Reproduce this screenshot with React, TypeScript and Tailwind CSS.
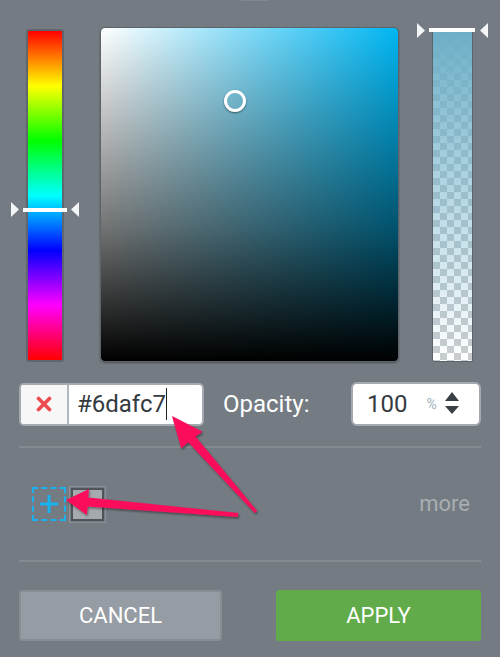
import React from 'react';

const checker =
  'repeating-conic-gradient(#c9cdd0 0% 25%, #ffffff 0% 50%) 0 0 / 14px 14px';

function Tri({ dir, className }: { dir: 'left' | 'right'; className: string }) {
  return (
    <svg width="8" height="15" viewBox="0 0 8 15" className={className}>
      {dir === 'right' ? (
        <polygon points="0,0 8,7.5 0,15" fill="#f4f5f6" />
      ) : (
        <polygon points="8,0 0,7.5 8,15" fill="#f4f5f6" />
      )}
    </svg>
  );
}

function Arrows() {
  return (
    <svg className="absolute inset-0 pointer-events-none" width="500" height="657" viewBox="0 0 500 657">
      <defs>
        <filter id="sh" x="-20%" y="-20%" width="140%" height="140%">
          <feDropShadow dx="1" dy="1.5" stdDeviation="0.8" floodColor="#000" floodOpacity="0.45" />
        </filter>
      </defs>
      <g fill="#fc0d5b" filter="url(#sh)">
        {/* arrow pointing at hex input */}
        <polygon points="172,416 202.5,431.8 195.5,436.6 257.1,510.9 254.9,513.1 188.3,442.3 181.2,448.6" />
        {/* arrow pointing at add swatch */}
        <polygon points="66,500 89,489 88.2,497.4 238.2,513 237.8,517 87.6,506.4 86.8,515" />
      </g>
    </svg>
  );
}

export default function App() {
  return (
    <div
      className="relative w-[500px] h-[657px] bg-[#747b82] overflow-hidden"
      style={{ fontFamily: 'Roboto, "Liberation Sans", sans-serif' }}
    >
      {/* little top handle */}
      <div className="absolute top-0 left-[241px] w-[27px] h-[1px] bg-[#81878d]" />

      {/* pickers */}
      <div className="flex pt-[27px]">
        {/* hue bar */}
        <div className="relative ml-[26px] mt-[2px] w-[38px] h-[333px]">
          <div
            className="w-full h-full rounded-[3px] border-2 border-[#5f666d]"
            style={{
              background:
                'linear-gradient(to bottom, #ff0000, #ffff00, #00ff00, #00ffff, #0000ff, #ff00ff, #ff0000)',
            }}
          />
          <div className="absolute left-[-3px] w-[44px] h-[4px] top-[179px] bg-white" />
          <Tri dir="right" className="absolute left-[-15px] top-[173px]" />
          <Tri dir="left" className="absolute left-[45px] top-[173px]" />
        </div>

        {/* saturation / value */}
        <div
          className="relative ml-[36px] w-[299px] h-[335px] rounded-[5px] border border-[#5c636a] shadow-[0_1px_2px_rgba(0,0,0,0.35)]"
          style={{
            background:
              'linear-gradient(to top, #000 0%, rgba(0,0,0,0.55) 40%, rgba(0,0,0,0) 100%), linear-gradient(to right, #ffffff, #00b6f2)',
          }}
        >
          <div className="absolute left-[123px] top-[62px] w-[22px] h-[22px] rounded-full border-[3px] border-white shadow-[0_1px_2px_rgba(0,0,0,0.5)]" />
        </div>

        {/* alpha bar */}
        <div className="relative ml-[33px] mt-[3px] w-[41px] h-[332px]">
          <div
            className="w-full h-full rounded-[2px] border border-[#5c636a]"
            style={{
              background: `linear-gradient(to bottom, rgba(109,175,199,1), rgba(109,175,199,0)), ${checker}`,
            }}
          />
          <div className="absolute left-[-3px] top-[-2px] w-[46px] h-[4px] bg-white" />
          <Tri dir="right" className="absolute left-[-15px] top-[-7px]" />
          <Tri dir="left" className="absolute left-[48px] top-[-7px]" />
        </div>
      </div>

      {/* hex + opacity */}
      <div className="flex items-center px-[19px] mt-[20px]">
        <div className="flex w-[185px] h-[43px] bg-white rounded-[5px] border-2 border-[#a4aaaf] overflow-hidden">
          <div className="w-[48px] h-full flex items-center justify-center bg-[#f7f7f7] border-r-2 border-[#b3b8bc]">
            <svg width="16" height="16" viewBox="0 0 16 16">
              <path d="M2.5 2.5 L13.5 13.5 M13.5 2.5 L2.5 13.5" stroke="#ec4b4f" strokeWidth="3.6" strokeLinecap="round" />
            </svg>
          </div>
          <div className="flex items-center pl-[8px] text-[24px] text-[#343a40] leading-none">
            #6dafc7
            <span className="w-[1.5px] h-[32px] bg-[#222]" />
          </div>
        </div>
        <span className="ml-[19px] text-[24px] text-white leading-none">Opacity:</span>
        <div className="ml-auto flex items-center w-[130px] h-[44px] bg-white rounded-[6px] border-2 border-[#a4aaaf]">
          <span className="ml-[14px] text-[24px] text-[#343a40] leading-none">100</span>
          <span className="ml-[19px] text-[14px] text-[#9fb0bb] leading-none">%</span>
          <svg width="14" height="24" viewBox="0 0 14 24" className="ml-[8px]">
            <polygon points="7,0 14,9 0,9" fill="#3a4046" />
            <polygon points="0,14 14,14 7,22" fill="#3a4046" />
          </svg>
        </div>
      </div>

      <div className="mx-[19px] mt-[20px] h-[2px] bg-[#858b91]" />

      {/* swatches */}
      <div className="flex items-center h-[112px] pl-[32px] pr-[30px]">
        <div className="w-[34px] h-[34px] border-2 border-dashed border-[#19b1f0] flex items-center justify-center">
          <svg width="20" height="20" viewBox="0 0 20 20">
            <path d="M10 1 V19 M1 10 H19" stroke="#19b1f0" strokeWidth="3" />
          </svg>
        </div>
        <div className="ml-[3px] w-[37px] h-[37px] border border-[#8b9197] p-[1px]">
          <div className="w-full h-full border-2 border-[#4e545a] bg-[#a6aaae]" />
        </div>
        <span className="ml-auto text-[22px] text-[#a9aeb3] leading-none">more</span>
      </div>

      <div className="mx-[19px] h-[2px] bg-[#858b91]" />

      {/* buttons */}
      <div className="flex justify-between px-[19px] mt-[28px]">
        <button className="w-[203px] h-[51px] rounded-[3px] bg-[#969ca3] border-2 border-[#878d93] text-white text-[22px]">
          CANCEL
        </button>
        <button className="w-[205px] h-[51px] rounded-[3px] bg-[#61ab4b] text-white text-[22px]">
          APPLY
        </button>
      </div>

      <Arrows />
    </div>
  );
}
